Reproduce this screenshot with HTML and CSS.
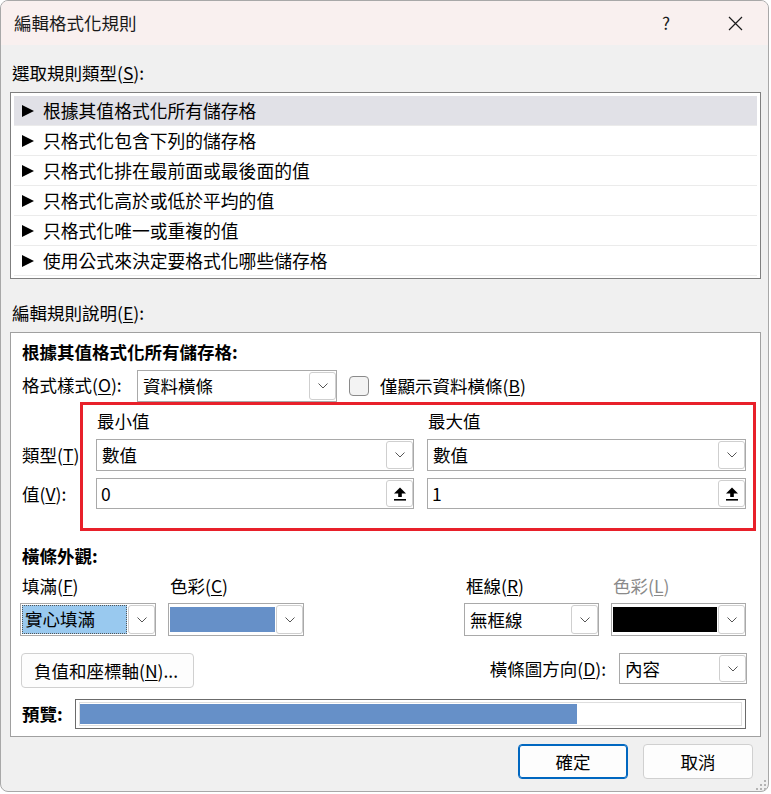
FILE: index.html
```html
<!DOCTYPE html>
<html lang="zh-Hant">
<head>
<meta charset="utf-8">
<title>編輯格式化規則</title>
<link rel="stylesheet" href="styles.css">
</head>
<body>
<div class="window">
  <div class="titlebar">
    <span class="title">編輯格式化規則</span>
    <span class="help">?</span>
    <svg class="close" width="15" height="15" viewBox="0 0 15 15"><path d="M1 1L14 14M14 1L1 14" stroke="#1b1b1b" stroke-width="1.2" fill="none"/></svg>
  </div>
  <div class="body">
    <div class="label lbl-type">選取規則類型(<u>S</u>):</div>
    <div class="listbox">
      <div class="item selected"><svg class="tri" width="12" height="12" viewBox="0 0 12 12"><polygon points="0,0 12,6 0,12" fill="#000"/></svg><span>根據其值格式化所有儲存格</span></div>
      <div class="item"><svg class="tri" width="12" height="12" viewBox="0 0 12 12"><polygon points="0,0 12,6 0,12" fill="#000"/></svg><span>只格式化包含下列的儲存格</span></div>
      <div class="item"><svg class="tri" width="12" height="12" viewBox="0 0 12 12"><polygon points="0,0 12,6 0,12" fill="#000"/></svg><span>只格式化排在最前面或最後面的值</span></div>
      <div class="item"><svg class="tri" width="12" height="12" viewBox="0 0 12 12"><polygon points="0,0 12,6 0,12" fill="#000"/></svg><span>只格式化高於或低於平均的值</span></div>
      <div class="item"><svg class="tri" width="12" height="12" viewBox="0 0 12 12"><polygon points="0,0 12,6 0,12" fill="#000"/></svg><span>只格式化唯一或重複的值</span></div>
      <div class="item"><svg class="tri" width="12" height="12" viewBox="0 0 12 12"><polygon points="0,0 12,6 0,12" fill="#000"/></svg><span>使用公式來決定要格式化哪些儲存格</span></div>
    </div>
    <div class="label lbl-desc">編輯規則說明(<u>E</u>):</div>
    <div class="panel">
      <div class="heading">根據其值格式化所有儲存格:</div>
      <div class="row-style">
        <span class="lbl-style">格式樣式(<u>O</u>):</span>
        <div class="combo combo-style"><span class="ctext">資料橫條</span><span class="dd"><svg width="10" height="6" viewBox="0 0 10 6"><polyline points="0.5,0.5 5,5 9.5,0.5" fill="none" stroke="#555" stroke-width="1"/></svg></span></div>
        <span class="checkbox"></span>
        <span class="chk-label">僅顯示資料橫條(<u>B</u>)</span>
      </div>
      <div class="row-minmax">
        <div class="side-labels">
          <div class="side-type">類型(<u>T</u>)</div>
          <div class="side-val">值(<u>V</u>):</div>
        </div>
        <div class="redbox">
          <div class="mm-col">
            <div class="mm-head">最小值</div>
            <div class="combo combo-mm"><span class="ctext">數值</span><span class="dd"><svg width="10" height="6" viewBox="0 0 10 6"><polyline points="0.5,0.5 5,5 9.5,0.5" fill="none" stroke="#555" stroke-width="1"/></svg></span></div>
            <div class="input"><span class="itext">0</span><span class="upbtn"><svg width="14" height="14" viewBox="0 0 14 14"><polygon points="7,0.5 13,6.5 1,6.5" fill="#000"/><rect x="5.2" y="6" width="3.6" height="4" fill="#000"/><rect x="1" y="12" width="12" height="1.6" fill="#000"/></svg></span></div>
          </div>
          <div class="mm-col mm-max">
            <div class="mm-head">最大值</div>
            <div class="combo combo-mm"><span class="ctext">數值</span><span class="dd"><svg width="10" height="6" viewBox="0 0 10 6"><polyline points="0.5,0.5 5,5 9.5,0.5" fill="none" stroke="#555" stroke-width="1"/></svg></span></div>
            <div class="input"><span class="itext">1</span><span class="upbtn"><svg width="14" height="14" viewBox="0 0 14 14"><polygon points="7,0.5 13,6.5 1,6.5" fill="#000"/><rect x="5.2" y="6" width="3.6" height="4" fill="#000"/><rect x="1" y="12" width="12" height="1.6" fill="#000"/></svg></span></div>
          </div>
        </div>
      </div>
      <div class="heading heading-bar">橫條外觀:</div>
      <div class="appearance">
        <div class="ap-col ap-fill">
          <div class="ap-label">填滿(<u>F</u>)</div>
          <div class="combo combo-ap"><span class="sel-text">實心填滿</span><span class="dd"><svg width="10" height="6" viewBox="0 0 10 6"><polyline points="0.5,0.5 5,5 9.5,0.5" fill="none" stroke="#555" stroke-width="1"/></svg></span></div>
        </div>
        <div class="ap-col ap-color">
          <div class="ap-label">色彩(<u>C</u>)</div>
          <div class="combo combo-ap"><span class="swatch swatch-blue"></span><span class="dd"><svg width="10" height="6" viewBox="0 0 10 6"><polyline points="0.5,0.5 5,5 9.5,0.5" fill="none" stroke="#555" stroke-width="1"/></svg></span></div>
        </div>
        <div class="ap-col ap-border">
          <div class="ap-label">框線(<u>R</u>)</div>
          <div class="combo combo-ap"><span class="ctext">無框線</span><span class="dd"><svg width="10" height="6" viewBox="0 0 10 6"><polyline points="0.5,0.5 5,5 9.5,0.5" fill="none" stroke="#555" stroke-width="1"/></svg></span></div>
        </div>
        <div class="ap-col ap-bcolor">
          <div class="ap-label disabled">色彩(<u>L</u>)</div>
          <div class="combo combo-ap"><span class="swatch swatch-black"></span><span class="dd"><svg width="10" height="6" viewBox="0 0 10 6"><polyline points="0.5,0.5 5,5 9.5,0.5" fill="none" stroke="#555" stroke-width="1"/></svg></span></div>
        </div>
      </div>
      <div class="row-axis">
        <button class="btn-axis">負值和座標軸(<u>N</u>)...</button>
        <span class="lbl-dir">橫條圖方向(<u>D</u>):</span>
        <div class="combo combo-dir"><span class="ctext">內容</span><span class="dd"><svg width="10" height="6" viewBox="0 0 10 6"><polyline points="0.5,0.5 5,5 9.5,0.5" fill="none" stroke="#555" stroke-width="1"/></svg></span></div>
      </div>
      <div class="row-preview">
        <span class="lbl-preview">預覽:</span>
        <div class="preview"><div class="preview-inner"><div class="preview-bar" style="width:75.2%"></div></div></div>
      </div>
    </div>
    <div class="buttons">
      <button class="btn primary">確定</button>
      <button class="btn">取消</button>
    </div>
  </div>
  <svg class="grip" width="10" height="10" viewBox="0 0 10 10"><g fill="#b4b4b4"><rect x="8" y="0" width="2" height="2"/><rect x="4" y="4" width="2" height="2"/><rect x="8" y="4" width="2" height="2"/><rect x="0" y="8" width="2" height="2"/><rect x="4" y="8" width="2" height="2"/><rect x="8" y="8" width="2" height="2"/></g></svg>
</div>
</body>
</html>
```

FILE: styles.css
```css
* { box-sizing: border-box; }
html, body { margin: 0; padding: 0; }
body {
  width: 771px;
  height: 794px;
  overflow: hidden;
  background: #ffffff;
  font-family: "Noto Sans CJK TC", "Microsoft JhengHei", sans-serif;
  font-size: 17.5px;
  color: #000;
}
u { text-underline-offset: 2px; text-decoration-thickness: 1px; }

.window {
  position: relative;
  width: 769px;
  height: 792px;
  border: 1px solid #a8a8a8;
  border-radius: 8px;
  background: #f0f0f0;
  overflow: hidden;
}

.titlebar {
  height: 44px;
  background: #f9f0ef;
  display: flex;
  align-items: center;
  padding-left: 13px;
  padding-right: 25px;
}
.title { line-height: 24px; color: #1a1a1a; }
.help { margin-left: auto; margin-right: 58px; font-size: 17px; color: #1a1a1a; line-height: 24px; }
.close { display: block; }

.body { padding-left: 9px; }
.label { line-height: 24px; padding-left: 2px; }
.lbl-type { margin-top: 16px; }

.listbox {
  margin-top: 7px;
  width: 751px;
  height: 187px;
  border: 1px solid #7f7f7f;
  background: #fff;
  padding: 3px 3px;
}
.item {
  height: 30px;
  display: flex;
  align-items: center;
  padding-left: 8px;
  border-bottom: 1px solid #ebebeb;
  line-height: 29px;
  font-size: 17.8px;
}
.item.selected { background: #e1e1e7; }
.tri { display: block; margin-right: 9px; flex: none; }

.lbl-desc { margin-top: 22px; }

.panel {
  margin-top: 7px;
  width: 751px;
  height: 405px;
  border: 1px solid #a0a0a0;
  background: #fff;
}
.heading {
  font-weight: bold;
  line-height: 24px;
  padding-left: 11px;
  margin-top: 7px;
}

.row-style {
  display: flex;
  align-items: center;
  height: 32px;
  margin-top: 6px;
  padding-left: 11px;
}
.lbl-style { width: 115px; line-height: 24px; margin-top: -3px; }

.combo {
  display: flex;
  align-items: center;
  background: #fff;
  border: 1px solid #a9a9a9;
  padding-left: 5px;
}
.ctext { line-height: 24px; white-space: nowrap; }
.dd {
  align-self: stretch;
  margin: 1px 0 1px auto;
  width: 27px;
  border: 1px solid #cfcfcf;
  border-radius: 3px;
  background: #fff;
  display: flex;
  align-items: center;
  justify-content: center;
}
.dd svg { display: block; }
.combo-style { width: 200px; height: 32px; }

.checkbox {
  width: 20px;
  height: 20px;
  margin-left: 12px;
  border: 1px solid #8a8a8a;
  border-radius: 4px;
  background: #f3f3f3;
}
.chk-label { margin-left: 11px; line-height: 24px; }

.row-minmax { display: flex; padding-left: 11px; }
.side-labels { width: 58px; padding-top: 37px; }
.side-type { height: 32px; line-height: 32px; }
.side-val { height: 31px; line-height: 31px; margin-top: 7px; }

.redbox {
  width: 676px;
  height: 129px;
  border: 3px solid #e8202a;
  display: flex;
  padding: 4px 7px 0 13px;
  gap: 13px;
}
.mm-col { width: 318px; }
.mm-max { width: 319px; }
.mm-head { line-height: 24px; padding-left: 1px; margin-bottom: 6px; }
.combo-mm { height: 32px; }
.input {
  display: flex;
  align-items: center;
  height: 31px;
  margin-top: 7px;
  border: 1px solid #a9a9a9;
  background: #fff;
  padding-left: 4px;
}
.itext { line-height: 24px; }
.upbtn {
  margin: 1px 0 1px auto;
  align-self: stretch;
  width: 27px;
  border: 1px solid #cfcfcf;
  border-radius: 3px;
  background: #fff;
  display: flex;
  align-items: center;
  justify-content: center;
}
.upbtn svg { display: block; }

.heading-bar { margin-top: 13px; }

.appearance {
  display: flex;
  padding-left: 9px;
  margin-top: 6px;
}
.ap-label { line-height: 24px; padding-left: 2px; margin-bottom: 5px; }
.ap-label.disabled { color: #8a8a8a; }
.ap-fill { width: 136px; }
.ap-color { width: 136px; margin-left: 12px; }
.ap-border { width: 135px; margin-left: 160px; }
.ap-bcolor { width: 135px; margin-left: 12px; }
.combo-ap { height: 33px; padding-left: 1px; }
.sel-text {
  align-self: stretch;
  margin: 1px 0;
  width: 105px;
  background: #99c9ef;
  outline: 1px dotted #555;
  outline-offset: -1px;
  line-height: 27px;
  padding-left: 3px;
}
.swatch { align-self: stretch; margin: 3px 0; width: 105px; }
.swatch-blue { background: #6690c8; }
.swatch-black { background: #000; width: 104px; }
.combo-ap .ctext { padding-left: 4px; }

.row-axis {
  display: flex;
  align-items: flex-start;
  margin-top: 17px;
  padding-left: 10px;
  padding-right: 13px;
}
.btn-axis {
  width: 173px;
  height: 35px;
  border: 1px solid #d0d0d0;
  border-radius: 4px;
  background: #fdfdfd;
  font-family: inherit;
  font-size: 17.5px;
  color: #000;
  padding: 0 0 0 12px;
  text-align: left;
  line-height: 24px;
}
.lbl-dir { margin-left: auto; line-height: 31px; }
.combo-dir { width: 128px; height: 31px; margin-left: 13px; }

.row-preview {
  display: flex;
  align-items: center;
  margin-top: 11px;
  padding-left: 11px;
}
.lbl-preview { width: 53px; font-weight: bold; line-height: 24px; }
.preview {
  width: 671px;
  height: 30px;
  border: 1px solid #6b6b6b;
  background: #fff;
  padding: 2px 3px;
}
.preview-inner {
  height: 24px;
  border: 1px solid #dedede;
  padding: 1px 0;
}
.preview-bar { height: 20px; background: #6690c8; }

.buttons {
  display: flex;
  justify-content: flex-end;
  gap: 15px;
  margin-top: 7px;
  padding-right: 15px;
}
.btn {
  width: 110px;
  height: 35px;
  border: 1px solid #d0d0d0;
  border-radius: 4px;
  background: #fdfdfd;
  font-family: inherit;
  font-size: 17.5px;
  color: #000;
  padding: 0;
  line-height: 24px;
}
.btn.primary { border: 1px solid #0067c0; box-shadow: inset 0 0 0 1px #0067c0; }

.grip { position: absolute; right: 2px; bottom: 1px; }
```
